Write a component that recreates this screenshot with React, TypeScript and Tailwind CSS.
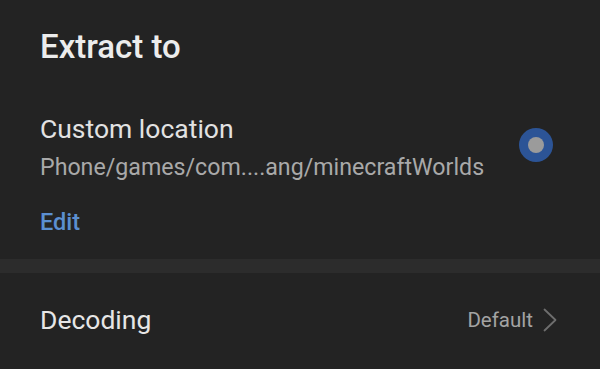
const font = { fontFamily: 'Roboto, "Noto Sans", sans-serif' };

const Radio = () => (
  <div className="mt-[14px] flex h-[34px] w-[34px] shrink-0 items-center justify-center rounded-full bg-[#2c5496]">
    <div className="h-[16px] w-[16px] rounded-full bg-[#9b9b9b]" />
  </div>
);

const Chevron = () => (
  <svg width="14" height="24" viewBox="0 0 14 24" fill="none">
    <path d="M1.5 1.5 L12.5 12 L1.5 22.5" stroke="#6e6e6e" strokeWidth="1.8" strokeLinecap="round" strokeLinejoin="round" />
  </svg>
);

export default function App() {
  return (
    <div className="flex h-[369px] w-[600px] flex-col overflow-hidden bg-[#232323]" style={font}>
      <section className="pb-[22px] pl-[40px] pr-[47px] pt-[27px]">
        <h1 className="text-[33px] font-medium leading-[40px] text-[#ececec]">Extract to</h1>
        <div className="mt-[47px] flex items-start justify-between">
          <div>
            <p className="text-[26.5px] leading-[30px] text-[#e2e2e2]">Custom location</p>
            <p className="mt-[8px] text-[23.2px] leading-[30px] text-[#a9a9a9]">Phone/games/com....ang/minecraftWorlds</p>
            <button className="mt-[25px] text-[23.5px] font-medium leading-[30px] text-[#5b8fd1]">Edit</button>
          </div>
          <Radio />
        </div>
      </section>
      <div className="h-[14px] bg-[#2c2c2c]" />
      <section className="flex items-center justify-between pl-[40px] pr-[43px] pt-[31px]">
        <span className="text-[26.5px] leading-[32px] text-[#e6e6e6]">Decoding</span>
        <div className="flex items-center gap-[10px]">
          <span className="text-[20.5px] leading-[28px] text-[#a3a3a3]">Default</span>
          <Chevron />
        </div>
      </section>
    </div>
  );
}
